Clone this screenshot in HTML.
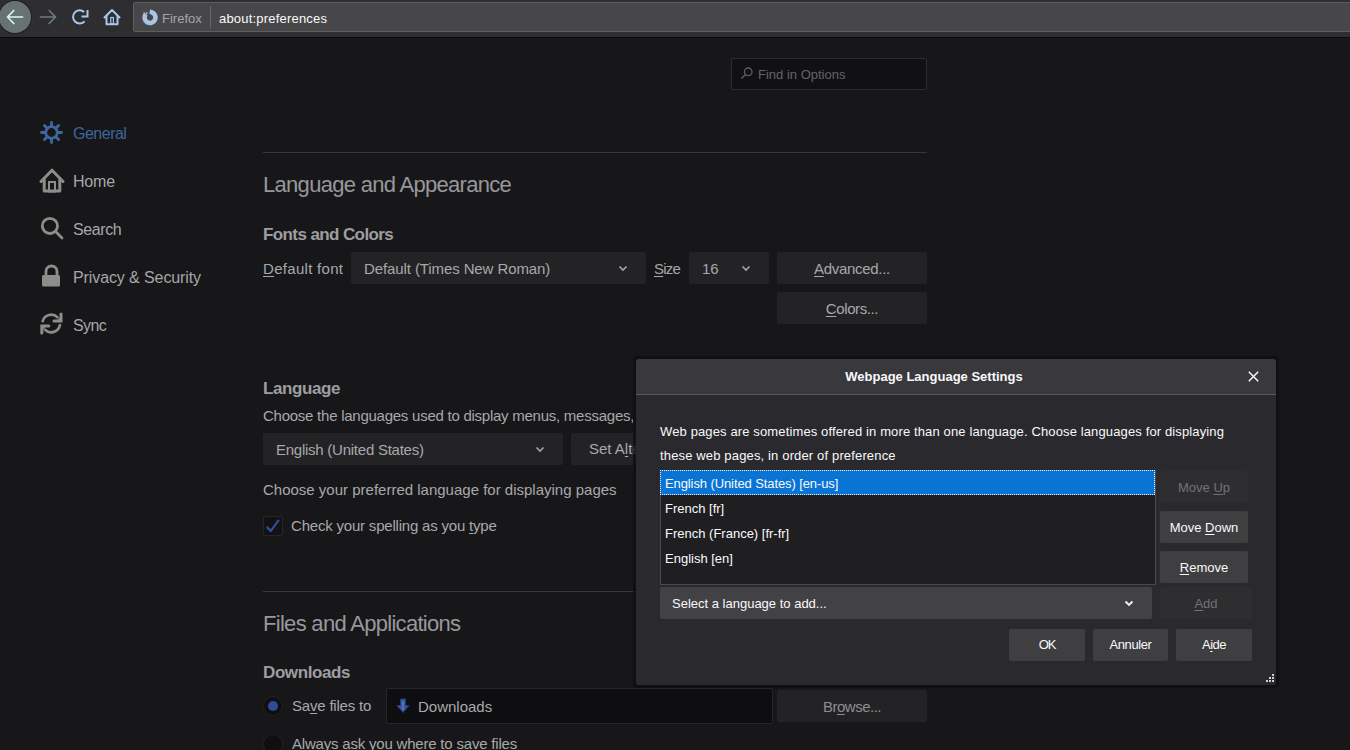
<!DOCTYPE html>
<html><head><meta charset="utf-8">
<style>
*{box-sizing:border-box;margin:0;padding:0}
html,body{width:1350px;height:750px;overflow:hidden;background:#171719;font-family:"Liberation Sans",sans-serif;color:#a8a8aa}
.a{position:absolute}
.t{position:absolute;white-space:nowrap;line-height:1}
.s15{font-size:15px}
.s13{font-size:13px}
.bx{position:absolute;border-radius:2px}
.pbtn{background:#232325}
.dbtn{background:#3f3f42}
.dis{background:#2e2e31}
.sep{position:absolute;left:263px;width:664px;height:1px;background:#38383a}
u{text-decoration:underline;text-underline-offset:2px}
</style></head><body>

<!-- ===== toolbar ===== -->
<div class="a" style="left:0;top:0;width:1350px;height:37px;background:#2e2e30"></div>
<div class="a" style="left:0;top:37px;width:1350px;height:1px;background:#0c0c0d"></div>
<div class="a" style="left:-1px;top:1px;width:32px;height:32px;border-radius:50%;background:#687272;box-shadow:0 0 0 1px #1f1f21"></div>
<svg class="a" style="left:0;top:0" width="130" height="37" viewBox="0 0 130 37">
  <g fill="none" stroke-linecap="round" stroke-linejoin="round" stroke-width="1.7">
    <path d="M22.5 17H7.5 M13.8 10.5L7.5 17L13.8 23.5" stroke="#d8f8f0"/>
    <path d="M40.5 17H55.5 M49.2 10.5L55.5 17L49.2 23.5" stroke="#6e7c7c"/>
  </g>
  <path d="M84.2 12.1A6.6 6.6 0 1 0 84.6 21.3" fill="none" stroke="#a8c6ee" stroke-width="2"/>
  <path d="M87.5 10V16.5H81.5" fill="none" stroke="#a8c6ee" stroke-width="2"/>
  <path d="M104.5 17.5L112 10L119.5 17.5M106.5 16V24.3H117.5V16" fill="none" stroke="#a8c6ee" stroke-width="2" stroke-linejoin="round" stroke-linecap="round"/>
  <rect x="110.8" y="17.5" width="2.6" height="6.5" fill="none" stroke="#a8c6ee" stroke-width="1.2"/>
</svg>
<div class="a" style="left:133px;top:2px;width:1230px;height:30px;background:#474749;border:1px solid #5e5e60;border-radius:2px"></div>
<svg class="a" style="left:138px;top:5px" width="24" height="24" viewBox="0 0 24 24">
  <path d="M12.96 7.08A5.5 5.5 0 1 1 7.79 8.96" fill="none" stroke="#a4c4ec" stroke-width="4.6"/>
  <path d="M12.2 4.3L16 6.6L13.5 9.6L11.3 8.6Z M5.6 6.2L7.4 8.4L6 10Z M8.3 6.5L10 8.4L8 9.5Z" fill="#a4c4ec"/>
  <path d="M13.9 8.2A4.6 4.6 0 1 1 7.4 10.2" fill="none" stroke="#eec46a" stroke-width="1" stroke-dasharray="1 1.8"/>
</svg>
<div class="t s13" style="left:162px;top:12px;color:#a6a6a8">Firefox</div>
<div class="a" style="left:210px;top:6px;width:1px;height:22px;background:#66686a"></div>
<div class="t s13" style="left:219px;top:12px;color:#f9f9fa;letter-spacing:0.2px">about:preferences</div>

<!-- ===== find ===== -->
<div class="bx" style="left:731px;top:58px;width:196px;height:32px;background:#111113;border:1px solid #2e2e31"></div>
<svg class="a" style="left:740px;top:66px" width="14" height="14" viewBox="0 0 14 14">
  <circle cx="8.2" cy="5.8" r="3.8" fill="none" stroke="#5e5e62" stroke-width="1.3"/>
  <path d="M5.4 8.6L1.8 12.2" stroke="#5e5e62" stroke-width="1.4" stroke-linecap="round"/>
</svg>
<div class="t s13" style="left:758px;top:68px;color:#646468">Find in Options</div>

<!-- ===== sidebar ===== -->
<svg class="a" style="left:38px;top:119px" width="28" height="228" viewBox="0 0 28 228">
  <!-- gear -->
  <circle cx="13.5" cy="13.5" r="5.8" fill="none" stroke="#3d669e" stroke-width="2.8"/>
  <path d="M20.00 13.50L23.50 13.50M18.10 18.10L20.57 20.57M13.50 20.00L13.50 23.50M8.90 18.10L6.43 20.57M7.00 13.50L3.50 13.50M8.90 8.90L6.43 6.43M13.50 7.00L13.50 3.50M18.10 8.90L20.57 6.43" stroke="#3d669e" stroke-width="2.9" stroke-linecap="round"/>
  <!-- home -->
  <path d="M3 62.5L14 51.2L25 62.5M6.2 60V72H21.8V60" fill="none" stroke="#8d8d89" stroke-width="3" stroke-linejoin="round" stroke-linecap="round"/>
  <rect x="11" y="63" width="6" height="9.5" fill="none" stroke="#8d8d89" stroke-width="2"/>
  <!-- search -->
  <circle cx="11.9" cy="106.9" r="7.6" fill="none" stroke="#8d8d89" stroke-width="2.8"/>
  <path d="M17.6 112.6L24 119" stroke="#8d8d89" stroke-width="2.8" stroke-linecap="round"/>
  <!-- lock -->
  <path d="M8 157V152.5A5.5 5.5 0 0 1 19 152.5V157" fill="none" stroke="#8d8d89" stroke-width="2.8"/>
  <rect x="4" y="156" width="18" height="11.5" rx="1.5" fill="#8d8d89"/>
  <!-- sync -->
  <path d="M4.7 202.2A8.8 8.8 0 0 1 19.5 198.4M21.9 206A8.8 8.8 0 0 1 6.9 210.6" fill="none" stroke="#8d8d89" stroke-width="2.7" stroke-linecap="round"/>
  <path d="M23 195V202H16 M3.8 214V207H10.8" fill="none" stroke="#8d8d89" stroke-width="3" stroke-linecap="round"/><path d="M23 197.5V202H18.5Z M3.8 211.5V207H8.3Z" fill="#8d8d89"/>
</svg>
<div class="t" style="left:73px;top:126px;font-size:16px;letter-spacing:-0.5px;color:#3d669e">General</div>
<div class="t" style="left:73px;top:174px;font-size:16px;letter-spacing:-0.2px;color:#a6a6a8">Home</div>
<div class="t" style="left:73px;top:222px;font-size:16px;letter-spacing:-0.4px;color:#a6a6a8">Search</div>
<div class="t" style="left:73px;top:270px;font-size:16px;letter-spacing:-0.1px;color:#a6a6a8">Privacy &amp; Security</div>
<div class="t" style="left:73px;top:318px;font-size:16px;letter-spacing:-0.6px;color:#a6a6a8">Sync</div>

<!-- ===== content ===== -->
<div class="sep" style="top:152px"></div>
<div class="t" style="left:263px;top:174px;font-size:22px;letter-spacing:-0.7px;color:#98989b">Language and Appearance</div>
<div class="t" style="left:263px;top:226px;font-size:17px;font-weight:bold;letter-spacing:-0.6px;color:#9e9ea0">Fonts and Colors</div>

<div class="t s15" style="left:263px;top:261px;letter-spacing:0.3px"><u>D</u>efault font</div>
<div class="bx pbtn" style="left:351px;top:252px;width:295px;height:32px"></div>
<div class="t s15" style="left:364px;top:261px;letter-spacing:-0.1px">Default (Times New Roman)</div>
<svg class="a" style="left:618px;top:264px" width="10" height="8"><path d="M1.5 2.5L5 6L8.5 2.5" fill="none" stroke="#a0a4a4" stroke-width="1.7"/></svg>
<div class="t s15" style="left:654px;top:261px;letter-spacing:-0.8px"><u>S</u>ize</div>
<div class="bx pbtn" style="left:689px;top:252px;width:80px;height:32px"></div>
<div class="t s15" style="left:702px;top:261px">16</div>
<svg class="a" style="left:741px;top:264px" width="10" height="8"><path d="M1.5 2.5L5 6L8.5 2.5" fill="none" stroke="#a0a4a4" stroke-width="1.7"/></svg>
<div class="bx pbtn" style="left:777px;top:252px;width:150px;height:32px"></div>
<div class="t s15" style="left:777px;width:150px;text-align:center;top:261px;letter-spacing:-0.3px"><u>A</u>dvanced...</div>
<div class="bx pbtn" style="left:777px;top:292px;width:150px;height:32px"></div>
<div class="t s15" style="left:777px;width:150px;text-align:center;top:301px;letter-spacing:-0.4px"><u>C</u>olors...</div>

<div class="t" style="left:263px;top:380px;font-size:17px;font-weight:bold;letter-spacing:-0.4px;color:#9e9ea0">Language</div>
<div class="t s15" style="left:263px;top:408px;letter-spacing:-0.25px">Choose the languages used to display menus, messages, and notifications from Firefox.</div>
<div class="bx pbtn" style="left:263px;top:433px;width:300px;height:32px"></div>
<div class="t s15" style="left:276px;top:442px;letter-spacing:-0.25px">English (United States)</div>
<svg class="a" style="left:535px;top:445px" width="10" height="8"><path d="M1.5 2.5L5 6L8.5 2.5" fill="none" stroke="#a0a4a4" stroke-width="1.7"/></svg>
<div class="bx pbtn" style="left:571px;top:433px;width:180px;height:32px"></div>
<div class="t s15" style="left:589px;top:441px">Set A<u>l</u>ternatives...</div>
<div class="t s15" style="left:263px;top:482px">Choose your preferred language for displaying pages</div>
<div class="bx" style="left:263px;top:516px;width:20px;height:20px;background:#121214;border:1px solid #26262a"></div>
<svg class="a" style="left:263px;top:516px" width="20" height="20"><path d="M4.2 11.4L7.8 14.9L15.4 4.6" fill="none" stroke="#30509c" stroke-width="2.2" stroke-linecap="round" stroke-linejoin="round"/></svg>
<div class="t s15" style="left:291px;top:518px;letter-spacing:-0.2px">Check your spelling as you <u>t</u>ype</div>

<div class="sep" style="top:591px"></div>
<div class="t" style="left:263px;top:613px;font-size:22px;letter-spacing:-0.7px;color:#98989b">Files and Applications</div>
<div class="t" style="left:263px;top:664px;font-size:17px;font-weight:bold;letter-spacing:-0.4px;color:#9e9ea0">Downloads</div>
<div class="a" style="left:263px;top:696px;width:20px;height:20px;border-radius:50%;background:#0f0f11;border:1px solid #222225"></div>
<div class="a" style="left:268px;top:701px;width:10px;height:10px;border-radius:50%;background:#2f4b94"></div>
<div class="t s15" style="left:292px;top:698px;letter-spacing:-0.2px">Sa<u>v</u>e files to</div>
<div class="bx" style="left:386px;top:688px;width:387px;height:36px;background:#0e0e10;border:1px solid #262628"></div>
<svg class="a" style="left:396px;top:698px" width="14" height="16" viewBox="0 0 14 16"><path d="M4.5 1H9.5V7.5H13L7 14.5L1 7.5H4.5Z" fill="#3656a0" stroke="#2a3f70" stroke-width="0.8"/><path d="M7 3V12" stroke="#6f8fd0" stroke-width="1"/></svg>
<div class="t s15" style="left:418px;top:699px">Downloads</div>
<div class="bx pbtn" style="left:777px;top:690px;width:150px;height:32px"></div>
<div class="t s15" style="left:777px;width:150px;text-align:center;top:699px;letter-spacing:-0.5px;color:#8e8e92">Br<u>o</u>wse...</div>
<div class="a" style="left:263px;top:734px;width:20px;height:20px;border-radius:50%;background:#0f0f11;border:1px solid #222225"></div>
<div class="t s15" style="left:292px;top:736px;letter-spacing:-0.2px">Always ask you where to save files</div>

<!-- ===== dialog ===== -->
<div class="a" style="left:633px;top:356px;width:646px;height:332px;background:#0f0f11;border-radius:4px;opacity:.8"></div>
<div class="a" style="left:636px;top:359px;width:640px;height:326px;background:#2a2a2e;border-radius:3px;overflow:hidden">
  <div class="a" style="left:0;top:0;width:640px;height:35px;background:#38383d"></div>
  <div class="a" style="left:0;top:35px;width:640px;height:1px;background:#5a5a5e"></div>
</div>
<div class="t" style="left:636px;width:596px;text-align:center;top:370px;font-size:13px;font-weight:bold;color:#f9f9fa">Webpage Language Settings</div>
<svg class="a" style="left:1247px;top:370px" width="13" height="13"><path d="M1.8 1.8L11.2 11.2M11.2 1.8L1.8 11.2" stroke="#f9f9fa" stroke-width="1.5"/></svg>

<div class="t s13" style="left:660px;top:425px;color:#f9f9fa;letter-spacing:0.13px">Web pages are sometimes offered in more than one language. Choose languages for displaying</div>
<div class="t s13" style="left:660px;top:449px;color:#f9f9fa;letter-spacing:0.15px">these web pages, in order of preference</div>

<div class="a" style="left:660px;top:470px;width:496px;height:115px;background:#1f1f22;border:1px solid #4a4a4e"></div>
<div class="a" style="left:660px;top:470px;width:495px;height:25px;background:#0a74d4;outline:1px dotted #f0f0f0;outline-offset:-1px"></div>
<div class="t s13" style="left:665px;top:477px;color:#f9f9fa;letter-spacing:-0.1px">English (United States) [en-us]</div>
<div class="t s13" style="left:665px;top:502px;color:#f9f9fa">French [fr]</div>
<div class="t s13" style="left:665px;top:527px;color:#f9f9fa">French (France) [fr-fr]</div>
<div class="t s13" style="left:665px;top:552px;color:#f9f9fa">English [en]</div>

<div class="bx dis" style="left:1160px;top:471px;width:88px;height:32px"></div>
<div class="t s13" style="left:1160px;width:88px;text-align:center;top:481px;color:#727276">Move <u>U</u>p</div>
<div class="bx dbtn" style="left:1160px;top:511px;width:88px;height:32px"></div>
<div class="t s13" style="left:1160px;width:88px;text-align:center;top:521px;color:#f9f9fa">Move <u>D</u>own</div>
<div class="bx dbtn" style="left:1160px;top:551px;width:88px;height:32px"></div>
<div class="t s13" style="left:1160px;width:88px;text-align:center;top:561px;color:#f9f9fa"><u>R</u>emove</div>

<div class="bx" style="left:660px;top:587px;width:492px;height:32px;background:#424245"></div>
<div class="t s13" style="left:672px;top:597px;color:#f9f9fa">Select a language to add...</div>
<svg class="a" style="left:1124px;top:599px" width="10" height="8"><path d="M1.5 2.5L5 6L8.5 2.5" fill="none" stroke="#e8f8f4" stroke-width="1.9"/></svg>
<div class="bx dis" style="left:1160px;top:587px;width:92px;height:32px"></div>
<div class="t s13" style="left:1160px;width:92px;text-align:center;top:597px;color:#727276"><u>A</u>dd</div>

<div class="bx dbtn" style="left:1009px;top:629px;width:76px;height:32px"></div>
<div class="t s13" style="left:1009px;width:76px;text-align:center;top:638px;color:#f9f9fa;letter-spacing:-1.2px">OK</div>
<div class="bx dbtn" style="left:1093px;top:629px;width:75px;height:32px"></div>
<div class="t s13" style="left:1093px;width:75px;text-align:center;top:638px;color:#f9f9fa;letter-spacing:-0.4px">Annuler</div>
<div class="bx dbtn" style="left:1176px;top:629px;width:76px;height:32px"></div>
<div class="t s13" style="left:1176px;width:76px;text-align:center;top:638px;color:#f9f9fa;letter-spacing:-0.5px">A<u>i</u>de</div>
<svg class="a" style="left:1265px;top:673px" width="10" height="10"><g fill="#d0d0d2"><rect x="7" y="1" width="2" height="2"/><rect x="4" y="4" width="2" height="2"/><rect x="7" y="4" width="2" height="2"/><rect x="1" y="7" width="2" height="2"/><rect x="4" y="7" width="2" height="2"/><rect x="7" y="7" width="2" height="2"/></g></svg>
</body></html>
